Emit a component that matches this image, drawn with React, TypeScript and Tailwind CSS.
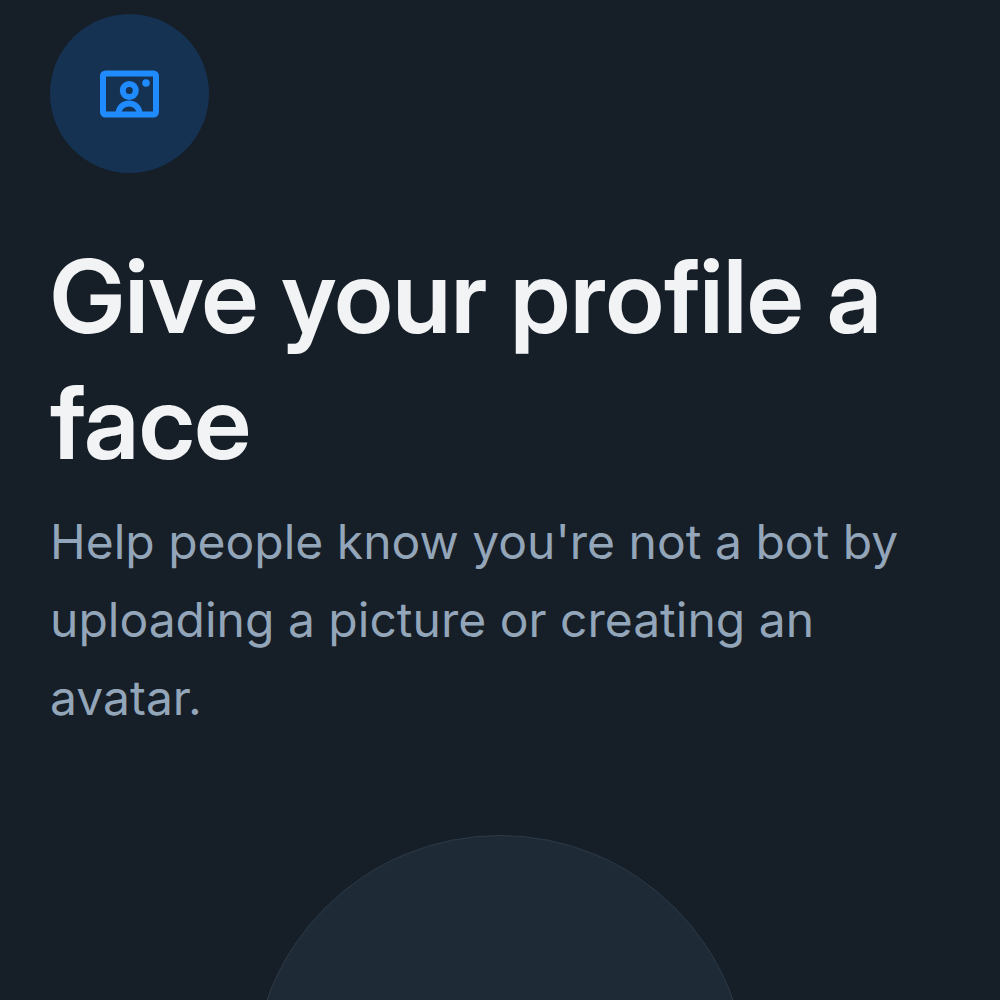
const ProfileIcon = () => (
    <svg viewBox="0 0 60 48" className="w-[60px] h-12" fill="none" stroke="#208bfe" strokeWidth="6" aria-hidden="true">
        <rect x="3" y="3.5" width="53" height="41" rx="2.5" />
        <circle cx="29.3" cy="20.5" r="6.5" />
        <path d="M18.5 43.5a10.5 10 0 0 1 21 0" />
        <circle cx="46" cy="13" r="3.8" fill="#208bfe" stroke="none" />
    </svg>
)

const App = () => {
    return (
        <main className="w-full h-screen overflow-hidden bg-[#161e27] px-[50px] pt-[14px] font-['Inter',sans-serif]">

            {/* step icon */}
            <div className="w-[159px] h-[159px] rounded-full bg-[#153253] flex items-center justify-center">
                <ProfileIcon />
            </div>

            {/* heading */}
            <div className="pt-[60px]">
                <h1 className="text-[102px] leading-[126px] font-semibold text-[#f1f3f5] font-['Inter_Display','Inter',sans-serif]">
                    Give your profile a face
                </h1>
                <p className="mt-[18px] text-[48px] leading-[78px] text-[#93a5b9]">
                    Help people know you're not a bot by uploading a picture or creating an avatar.
                </p>
            </div>

            {/* avatar placeholder */}
            <div className="mt-[98px] mx-auto w-[496px] h-[496px] rounded-full bg-[#1e2a35] border border-[#2c3a48]"></div>

        </main>
    )
}

export default App
